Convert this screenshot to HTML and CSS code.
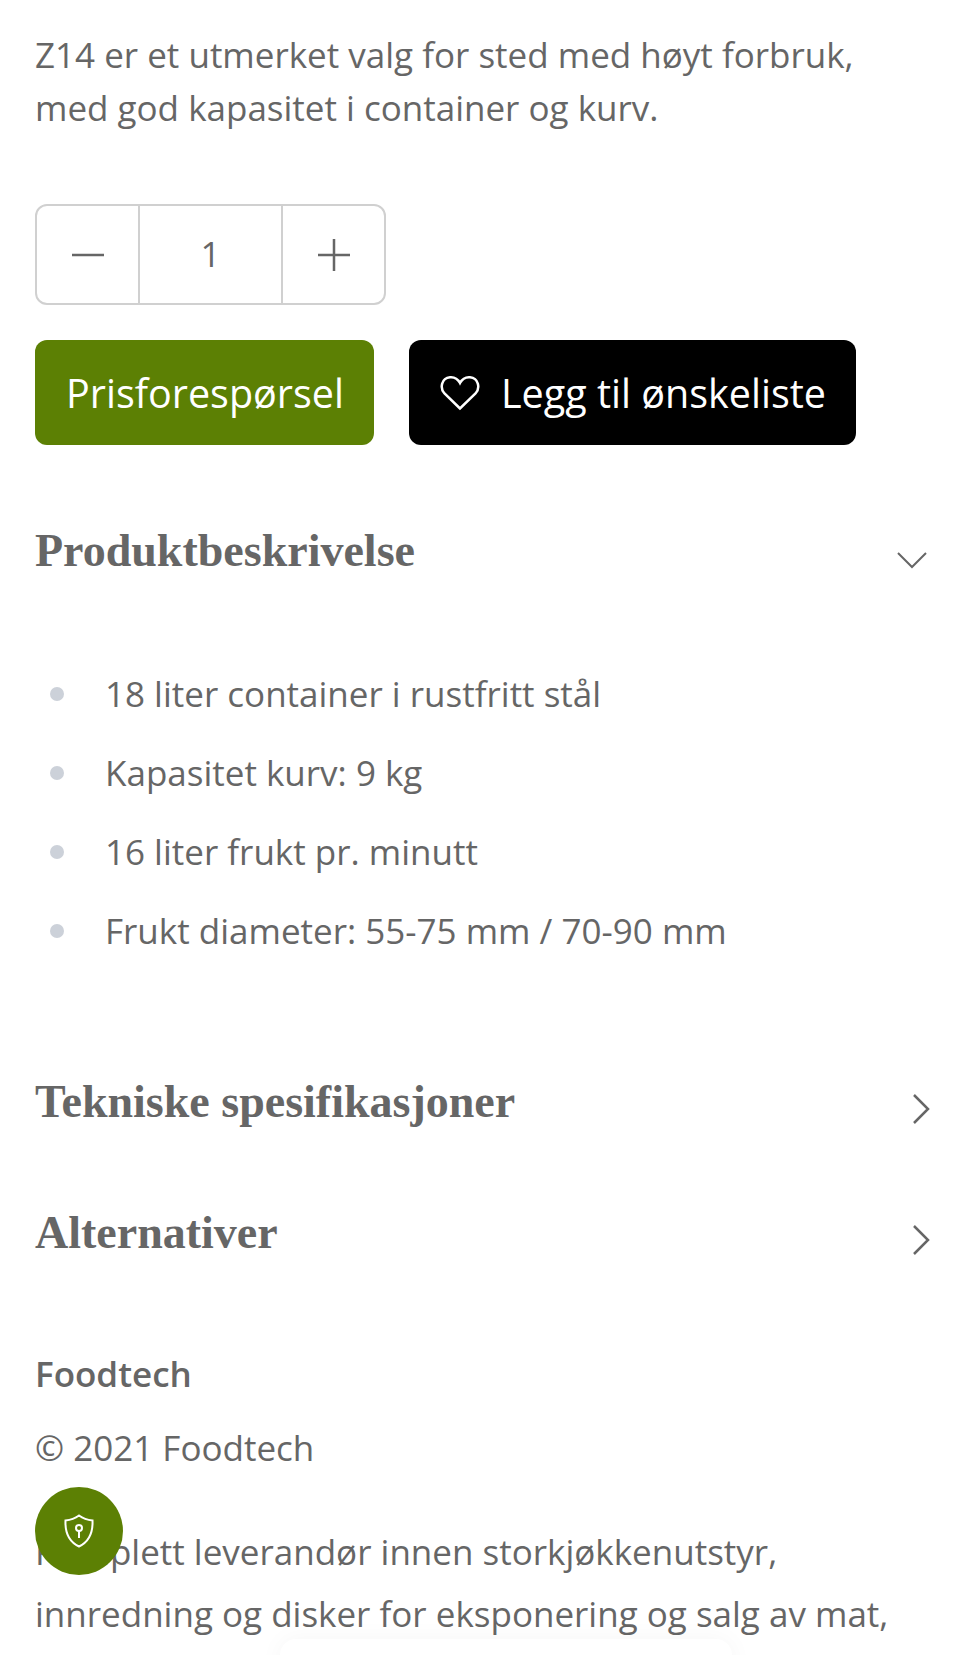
FILE: index.html
```html
<!DOCTYPE html>
<html lang="en">
<head>
    <meta charset="UTF-8">
    <meta name="viewport" content="width=device-width, initial-scale=1.0">
    <title>Z14</title>
    <link rel="stylesheet" href="styles.css">
</head>
<body>
    <p class="intro">Z14 er et utmerket valg for sted med høyt forbruk, med god kapasitet i container og kurv.</p>

    <!-- Quantity -->
    <div class="qty">
        <button class="qty-btn" aria-label="Minus">
            <svg width="34" height="34" viewBox="0 0 34 34"><path d="M1 17h32"/></svg>
        </button>
        <div class="qty-value">1</div>
        <button class="qty-btn" aria-label="Pluss">
            <svg width="34" height="34" viewBox="0 0 34 34"><path d="M1 17h32M17 1v32"/></svg>
        </button>
    </div>

    <div class="actions">
        <a class="btn btn-green">Prisforespørsel</a>
        <a class="btn btn-black">
            <svg class="heart" width="40" height="36" viewBox="0 0 40 36"><path d="M20 33.500 4.500 18.500C-.5 13 1.500 3 10 2.200c4.500-.4 8 2 10 5.800 2-3.800 5.500-6.200 10-5.800 8.500.8 10.500 10.800 5.500 16.300z"/></svg>
            Legg til ønskeliste
        </a>
    </div>

    <!-- Accordion -->
    <section class="acc acc-open">
        <div class="acc-head">
            <h2>Produktbeskrivelse</h2>
            <svg class="chevron-down" width="30" height="18" viewBox="0 0 30 18"><path d="M1 2l14 14L29 2"/></svg>
        </div>
        <ul class="specs">
            <li>18 liter container i rustfritt stål</li>
            <li>Kapasitet kurv: 9 kg</li>
            <li>16 liter frukt pr. minutt</li>
            <li>Frukt diameter: 55-75 mm / 70-90 mm</li>
        </ul>
    </section>
    <section class="acc acc-tech">
        <div class="acc-head">
            <h2>Tekniske spesifikasjoner</h2>
            <svg class="chevron-right" width="18" height="30" viewBox="0 0 18 30"><path d="M2 1l14 14L2 29"/></svg>
        </div>
    </section>
    <section class="acc acc-alt">
        <div class="acc-head">
            <h2>Alternativer</h2>
            <svg class="chevron-right" width="18" height="30" viewBox="0 0 18 30"><path d="M2 1l14 14L2 29"/></svg>
        </div>
    </section>

    <footer class="footer">
        <h3>Foodtech</h3>
        <p class="copy">© 2021 Foodtech</p>
        <p class="about">Komplett leverandør innen storkjøkkenutstyr, innredning og disker for eksponering og salg av mat,</p>
    </footer>

    <!-- Cookie badge -->
    <div class="badge">
        <svg width="36" height="36" viewBox="0 0 36 36"><path d="M18 2.500c4 3 8 4.500 13.500 5 .5 11-2 20.500-13.500 26-11.500-5.500-14-15-13.500-26C10 7 14 5.500 18 2.500z"/><circle cx="18" cy="15" r="3"/><path d="M18 18v7"/></svg>
    </div>
    <div class="sheet"></div>
</body>
</html>
```

FILE: styles.css
```css
html, body {
    height: 1655px;
    overflow: hidden;
}
body {
    margin: 0;
    padding: 28px 35px 0;
    position: relative;
    box-sizing: border-box;
    font-family: "Open Sans", sans-serif;
    font-size: 35px;
    color: #666;
    background: #fff;
}
p {
    margin: 0;
}
.intro {
    width: 830px;
    line-height: 53px;
}

.qty {
    display: flex;
    box-sizing: border-box;
    width: 351px;
    height: 101px;
    margin-top: 70px;
    border: 2px solid #d0d0d0;
    border-radius: 12px;
}
.qty-btn {
    flex: 1;
    padding: 0;
    border: none;
    background: none;
}
.qty-btn svg {
    display: block;
    margin: 0 auto;
    fill: none;
    stroke: #666;
    stroke-width: 2.500;
}
.qty-value {
    width: 141px;
    text-align: center;
    line-height: 95px;
    border-left: 2px solid #d0d0d0;
    border-right: 2px solid #d0d0d0;
}

.actions {
    display: flex;
    gap: 35px;
    margin-top: 35px;
}
.btn {
    display: flex;
    align-items: center;
    height: 105px;
    box-sizing: border-box;
    padding: 0 31px;
    border-radius: 12px;
    font-size: 39.500px;
    color: #fff;
}
.btn-green {
    padding-right: 30px;
    background: #5c8004;
}
.btn-black {
    padding-right: 30px;
    background: #000;
}
.heart {
    margin-right: 21px;
    fill: none;
    stroke: #fff;
    stroke-width: 2.500;
}

.acc h2 {
    margin: 0;
    font-family: "Liberation Serif", serif;
    font-size: 46px;
    font-weight: bold;
    line-height: 60px;
    color: #666;
}
.acc-head {
    display: flex;
    justify-content: space-between;
}
.acc-open {
    padding-top: 76px;
}
.chevron-down {
    margin: 30px -2px 0 0;
    fill: none;
    stroke: #666;
    stroke-width: 2;
}
.chevron-right {
    margin: 22px -5px 0 0;
    fill: none;
    stroke: #666;
    stroke-width: 2.500;
}
.specs {
    list-style: none;
    margin: 73px 0 0;
    padding: 0;
}
.specs li {
    display: flex;
    align-items: center;
    height: 79px;
}
.specs li::before {
    content: "";
    width: 14px;
    height: 14px;
    margin: 0 41px 0 15px;
    border-radius: 50%;
    background: #ccd1d9;
}
.acc-tech {
    padding-top: 102px;
}
.acc-alt {
    padding-top: 71px;
}

.footer {
    padding-top: 88px;
}
.footer h3 {
    margin: 0;
    font-size: 35px;
    font-weight: 600;
    line-height: 45px;
}
.copy {
    margin-top: 29px;
    line-height: 45px;
}
.about {
    width: 860px;
    margin-top: 51px;
    line-height: 62px;
}

.badge {
    position: absolute;
    left: 35px;
    top: 1487px;
    width: 88px;
    height: 88px;
    display: flex;
    align-items: center;
    justify-content: center;
    border-radius: 50%;
    background: #5c8004;
}
.badge svg {
    fill: none;
    stroke: #fff;
    stroke-width: 2;
}
.sheet {
    position: absolute;
    left: 280px;
    top: 1639px;
    width: 452px;
    height: 60px;
    border-radius: 16px;
    background: #fff;
    box-shadow: 0 0 24px rgba(0, 0, 0, 0.04);
}
```
